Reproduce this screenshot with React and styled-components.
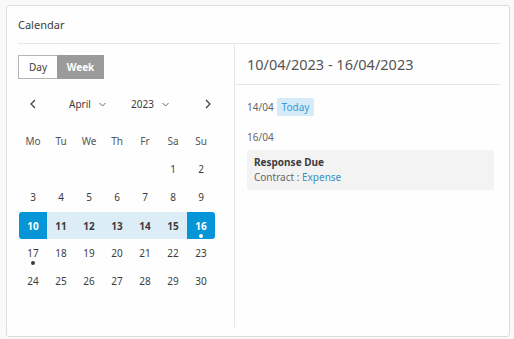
import React from "react";
import styled, { createGlobalStyle } from "styled-components";

const GlobalStyle = createGlobalStyle`
  html, body {
    margin: 0;
    padding: 0;
    background: #f9f9f9;
    font-family: "Noto Sans", "Open Sans", sans-serif;
    color: #3c3c3c;
  }
`;

const weekDays = ["Mo", "Tu", "We", "Th", "Fr", "Sa", "Su"];

// April 2023 starts on a Saturday
const days = [
  null, null, null, null, null, 1, 2,
  3, 4, 5, 6, 7, 8, 9,
  10, 11, 12, 13, 14, 15, 16,
  17, 18, 19, 20, 21, 22, 23,
  24, 25, 26, 27, 28, 29, 30,
];

const withEvents = [16, 17];

const ChevronLeft = () => (
  <svg width="6" height="10" viewBox="0 0 6 10" fill="none">
    <path d="M5 1L1 5l4 4" stroke="#3c3c3c" strokeWidth="1.2" />
  </svg>
);

const ChevronRight = () => (
  <svg width="6" height="10" viewBox="0 0 6 10" fill="none">
    <path d="M1 1l4 4-4 4" stroke="#3c3c3c" strokeWidth="1.2" />
  </svg>
);

const ChevronDown = () => (
  <svg width="7" height="5" viewBox="0 0 7 5" fill="none">
    <path d="M0.5 1l3 3 3-3" stroke="#666" strokeWidth="1" />
  </svg>
);

const App = () => {
  const dayVariant = (d) => {
    if (d === 10) return "start";
    if (d === 16) return "end";
    if (d > 10 && d < 16) return "range";
    return "plain";
  };

  return (
    <>
      <GlobalStyle />
      <Card>
        <CardTitle>Calendar</CardTitle>
        <CardBody>
          <LeftCol>
            <Toggle>
              <ToggleButton>Day</ToggleButton>
              <ToggleButton $active>Week</ToggleButton>
            </Toggle>
            <NavRow>
              <NavArrow $width="28px">
                <ChevronLeft />
              </NavArrow>
              <Picker $width="62px" $offset="22px">
                April
                <ChevronDown />
              </Picker>
              <Picker $width="60px">
                2023
                <ChevronDown />
              </Picker>
              <NavArrow $width="34px">
                <ChevronRight />
              </NavArrow>
            </NavRow>
            <MonthGrid>
              {weekDays.map((w) => (
                <WeekDay key={w}>{w}</WeekDay>
              ))}
              {days.map((d, i) => (
                <DayCell key={i} $variant={d ? dayVariant(d) : "plain"}>
                  {d}
                  {withEvents.includes(d) && (
                    <EventDot $light={d === 16} />
                  )}
                </DayCell>
              ))}
            </MonthGrid>
          </LeftCol>
          <RightCol>
            <RangeTitle>10/04/2023 - 16/04/2023</RangeTitle>
            <Agenda>
              <DayLabel>
                14/04<TodayBadge>Today</TodayBadge>
              </DayLabel>
              <DayLabel>16/04</DayLabel>
              <EventCard>
                <EventTitle>Response Due</EventTitle>
                <EventMeta>
                  Contract : <EventLink>Expense</EventLink>
                </EventMeta>
              </EventCard>
            </Agenda>
          </RightCol>
        </CardBody>
      </Card>
    </>
  );
};

const Card = styled.div`
  box-sizing: border-box;
  margin: 5px 0 0 6px;
  width: 504px;
  height: 332px;
  background: #fefefe;
  border: 1px solid #dcdcdc;
  border-radius: 3px;
  display: flex;
  flex-direction: column;
`;

const CardTitle = styled.div`
  height: 37px;
  display: flex;
  align-items: center;
  padding-left: 11px;
  font-size: 11px;
  color: #3c3c3c;
`;

const CardBody = styled.div`
  flex: 1;
  display: flex;
  margin: 0 9px 9px 11px;
  border-top: 1px solid #e6e6e6;
`;

const LeftCol = styled.div`
  width: 216px;
  border-right: 1px solid #e6e6e6;
  padding-top: 11px;
`;

const Toggle = styled.div`
  display: flex;
  height: 24px;
`;

const ToggleButton = styled.div`
  box-sizing: border-box;
  display: flex;
  align-items: center;
  justify-content: center;
  width: ${(p) => (p.$active ? "47px" : "39px")};
  font-size: 10px;
  font-weight: ${(p) => (p.$active ? 700 : 400)};
  color: ${(p) => (p.$active ? "#fff" : "#3c3c3c")};
  background: ${(p) => (p.$active ? "#9b9b9b" : "#fff")};
  border: 1px solid ${(p) => (p.$active ? "#9b9b9b" : "#b5b5b5")};
  border-right: ${(p) => (p.$active ? undefined : "none")};
`;

const NavRow = styled.div`
  display: flex;
  align-items: center;
  height: 24px;
  margin-top: 13px;
  padding-left: 1px;
`;

const NavArrow = styled.div`
  width: ${(p) => p.$width};
  display: flex;
  align-items: center;
  justify-content: center;
`;

const Picker = styled.div`
  display: flex;
  align-items: center;
  gap: 8px;
  font-size: 10px;
  color: #3c3c3c;
  width: ${(p) => p.$width};
  margin-left: ${(p) => p.$offset || 0};
`;

const MonthGrid = styled.div`
  display: grid;
  grid-template-columns: repeat(7, 28px);
  grid-auto-rows: 28px;
  margin: 11px 0 0 1px;
`;

const WeekDay = styled.div`
  display: flex;
  align-items: center;
  justify-content: center;
  font-size: 10px;
  color: #555;
`;

const cellBg = {
  start: "#0696d7",
  end: "#0696d7",
  range: "#dcedf8",
  plain: "transparent",
};

const cellRadius = {
  start: "3px 0 0 3px",
  end: "0 3px 3px 0",
  range: "0",
  plain: "0",
};

const DayCell = styled.div`
  position: relative;
  display: flex;
  align-items: center;
  justify-content: center;
  font-size: 10px;
  color: ${(p) =>
    p.$variant === "start" || p.$variant === "end" ? "#fff" : "#3c3c3c"};
  font-weight: ${(p) => (p.$variant === "plain" ? 400 : 700)};
  background: ${(p) => cellBg[p.$variant]};
  border-radius: ${(p) => cellRadius[p.$variant]};
  margin: ${(p) => (p.$variant === "plain" ? 0 : "1px 0 0")};
`;

const EventDot = styled.span`
  position: absolute;
  left: 50%;
  top: 22px;
  width: 4px;
  height: 4px;
  margin-left: -2px;
  border-radius: 50%;
  background: ${(p) => (p.$light ? "#fff" : "#3c3c3c")};
`;

const RightCol = styled.div`
  flex: 1;
  display: flex;
  flex-direction: column;
`;

const RangeTitle = styled.div`
  height: 40px;
  display: flex;
  align-items: center;
  padding-left: 12px;
  border-bottom: 1px solid #e6e6e6;
  font-size: 14.5px;
  color: #555;
`;

const Agenda = styled.div`
  padding: 13px 6px 0 12px;
  display: flex;
  flex-direction: column;
`;

const DayLabel = styled.div`
  display: flex;
  align-items: center;
  gap: 3px;
  height: 18px;
  font-size: 10px;
  color: #666;
  & + & {
    margin-top: 12px;
  }
`;

const TodayBadge = styled.span`
  display: inline-flex;
  align-items: center;
  height: 18px;
  padding: 0 5px;
  border-radius: 2px;
  background: #d5ecf8;
  color: #3a9bd5;
  font-size: 10px;
`;

const EventCard = styled.div`
  margin-top: 4px;
  padding: 5px 7px 5px;
  background: #f3f3f3;
  border-radius: 2px;
`;

const EventTitle = styled.div`
  font-size: 10px;
  font-weight: 700;
  color: #3c3c3c;
  line-height: 15px;
`;

const EventMeta = styled.div`
  font-size: 10px;
  color: #666;
  line-height: 15px;
`;

const EventLink = styled.span`
  color: #3a8fc5;
`;

export default App;
